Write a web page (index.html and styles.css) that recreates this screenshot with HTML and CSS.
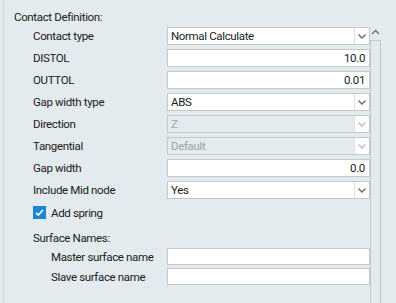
FILE: index.html
```html
<!DOCTYPE html>
<html>
<head>
<meta charset="utf-8">
<link rel="stylesheet" href="styles.css">
</head>
<body>
<div class="frame">
  <div class="content">
    <div class="heading">Contact Definition:</div>
    <div class="form">
      <div class="label">Contact type</div>
      <div class="combo"><span class="value">Normal Calculate</span><span class="btn"><svg width="8" height="5" viewBox="0 0 8 5"><path d="M0.5 0.5 L4 4 L7.5 0.5" fill="none" stroke="#6a6a6a" stroke-width="1.4"/></svg></span></div>

      <div class="label">DISTOL</div>
      <div class="input num">10.0</div>

      <div class="label">OUTTOL</div>
      <div class="input num">0.01</div>

      <div class="label">Gap width type</div>
      <div class="combo"><span class="value">ABS</span><span class="btn"><svg width="8" height="5" viewBox="0 0 8 5"><path d="M0.5 0.5 L4 4 L7.5 0.5" fill="none" stroke="#6a6a6a" stroke-width="1.4"/></svg></span></div>

      <div class="label">Direction</div>
      <div class="combo disabled"><span class="value">Z</span><span class="btn"><svg width="8" height="5" viewBox="0 0 8 5"><path d="M0.5 0.5 L4 4 L7.5 0.5" fill="none" stroke="#bcbcbc" stroke-width="1.4"/></svg></span></div>

      <div class="label">Tangential</div>
      <div class="combo disabled"><span class="value">Default</span><span class="btn"><svg width="8" height="5" viewBox="0 0 8 5"><path d="M0.5 0.5 L4 4 L7.5 0.5" fill="none" stroke="#bcbcbc" stroke-width="1.4"/></svg></span></div>

      <div class="label">Gap width</div>
      <div class="input num">0.0</div>

      <div class="label">Include Mid node</div>
      <div class="combo"><span class="value">Yes</span><span class="btn"><svg width="8" height="5" viewBox="0 0 8 5"><path d="M0.5 0.5 L4 4 L7.5 0.5" fill="none" stroke="#6a6a6a" stroke-width="1.4"/></svg></span></div>
    </div>

    <div class="check-row">
      <span class="checkbox"><svg width="13" height="13" viewBox="0 0 13 13"><path d="M3 6.8 L5.4 9 L10 3.8" fill="none" stroke="#fff" stroke-width="1.6"/></svg></span>
      <span class="check-label">Add spring</span>
    </div>

    <div class="subheading">Surface Names:</div>
    <div class="surface">
      <div class="label">Master surface name</div>
      <div class="input"></div>
      <div class="label">Slave surface name</div>
      <div class="input"></div>
    </div>
  </div>
  <div class="scrollbar">
    <svg class="arrow" width="11" height="6" viewBox="0 0 11 6"><path d="M2 5 L5.5 1.5 L9 5" fill="none" stroke="#707070" stroke-width="1.4"/></svg>
    <div class="thumb"></div>
  </div>
</div>
</body>
</html>
```
FILE: styles.css
```css
html, body {
  margin: 0;
  padding: 0;
  background: #e4ebee;
}
body {
  font-family: Roboto, "Liberation Sans", sans-serif;
  font-size: 11.5px;
  letter-spacing: -0.35px;
  color: #1a1a1a;
  width: 396px;
  height: 303px;
  overflow: hidden;
}
.frame {
  margin-left: 3px;
  border-left: 1px solid #cfd6d9;
  padding-left: 10px;
  height: 303px;
  display: flex;
  box-sizing: border-box;
}
.content {
  width: 356px;
  padding-top: 10px;
}
.heading {
  line-height: 14px;
  height: 14px;
}
.form {
  margin-top: 3px;
  margin-left: 19px;
  display: grid;
  grid-template-columns: 134px 203px;
  grid-auto-rows: 18px;
  row-gap: 4px;
}
.label {
  display: flex;
  align-items: center;
  white-space: nowrap;
}
.input, .combo {
  box-sizing: border-box;
  border: 1px solid #c3c8cb;
  background: #fff;
  display: flex;
  align-items: center;
  color: #1b1b1b;
}
.num {
  justify-content: flex-end;
  padding-right: 4px;
}
.combo .value {
  flex: 1;
  padding-left: 3px;
}
.combo .btn {
  width: 14px;
  height: 100%;
  border-left: 1px solid #dde1e3;
  display: flex;
  align-items: center;
  justify-content: center;
  background: #fff;
}
.combo.disabled {
  background: #e4ebee;
  color: #a2a2a2;
}
.check-row {
  margin-top: 7px;
  margin-left: 19px;
  display: flex;
  align-items: center;
  height: 13px;
}
.checkbox {
  width: 13px;
  height: 13px;
  background: #1a86d6;
  display: block;
}
.checkbox svg {
  display: block;
}
.check-label {
  margin-left: 5px;
}
.subheading {
  margin-top: 12px;
  margin-left: 19px;
  line-height: 14px;
  height: 14px;
}
.surface {
  margin-top: 3px;
  margin-left: 37px;
  display: grid;
  grid-template-columns: 116px 203px;
  grid-auto-rows: 17px;
  row-gap: 3px;
}
.scrollbar {
  width: 11px;
  padding-top: 29px;
  display: flex;
  flex-direction: column;
  align-items: center;
}
.arrow {
  display: block;
}
.thumb {
  margin-top: 5px;
  width: 11px;
  flex: 1;
  box-sizing: border-box;
  border: 1px solid #c3c8cb;
  border-bottom: none;
}
```
